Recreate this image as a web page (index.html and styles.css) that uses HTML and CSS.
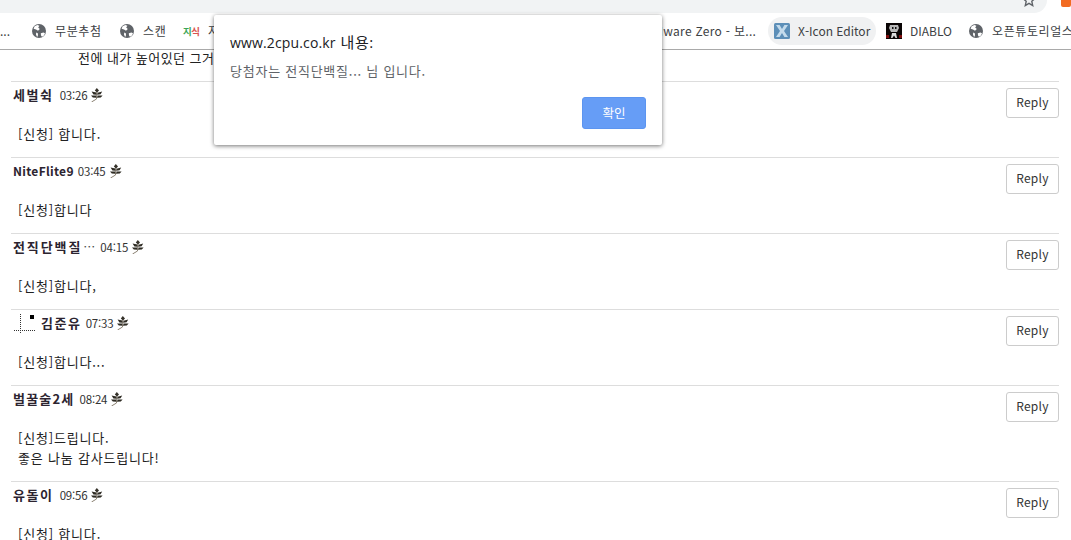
FILE: index.html
```html
<!DOCTYPE html>
<html lang="ko">
<head>
<meta charset="utf-8">
<title>2CPU</title>
<link rel="stylesheet" href="styles.css">
</head>
<body>
<svg class="defs" width="0" height="0" aria-hidden="true">
  <symbol id="globe" viewBox="0 0 14 14">
    <circle cx="7" cy="7" r="7" fill="#5f6368"/>
    <path d="M2.6 2.2 5.4 1 7.4 1.8 6.2 3.6 7.8 5 6 6.8 4 5.4 1.6 4.8zM8.8 9.2l2.6-.8 1.6.8-1 2.2-2 1.4-1-1.4zM4.2 8.4 6 9.6 5.8 12.6 4.8 12.6 4 10.6z" fill="#fff"/>
  </symbol>
  <symbol id="sprig" viewBox="0 0 13 14">
    <path d="M1.5 14 6.5 11 7 3" fill="none" stroke="#8a8172" stroke-width="1"/>
    <path d="M6.8 0 9 2.4 7 4.6 4.8 2.4z" fill="#35322a"/>
    <path d="M1.6 3.4 6.4 4.6 6.6 6.8 3.4 6.4zM12.2 3.6 7.6 4.8 7.2 6.8 10.6 6.2zM1 7.4 6.2 7.4 6.4 9.8 2.8 9.6zM12.6 7.4 7.6 7.6 7 9.8 10.8 9.4z" fill="#2f2c24"/>
  </symbol>
</svg>

<header class="chrome">
  <div class="toolbar">
    <div class="omnibox">
      <svg class="star" viewBox="0 0 14 14"><path d="M7 1.2 8.7 5.1 13 5.5 9.8 8.3 10.7 12.5 7 10.3 3.3 12.5 4.2 8.3 1 5.5 5.3 5.1z" fill="none" stroke="#5f6368" stroke-width="1.4"/></svg>
    </div>
    <div class="extension"></div>
  </div>
  <nav class="bookmarks">
    <span class="mark mark-cut">...</span>
    <span class="mark mark-a ko"><svg class="fav"><use href="#globe"/></svg>무분추첨</span>
    <span class="mark mark-b ko"><svg class="fav"><use href="#globe"/></svg>스캔</span>
    <span class="mark mark-c ko"><span class="jisik"><span class="ji">지</span><span class="sik">식</span></span>저장소</span>
    <span class="mark mark-d">VMware Zero - 보...</span>
    <span class="mark mark-e active">
      <svg class="fav" viewBox="0 0 16 16"><rect width="16" height="16" rx="1.5" fill="#5d8fb8"/><path d="M2 2h3.6L8 6l2.4-4H14l-4 6 4 6h-3.6L8 10l-2.4 4H2l4-6z" fill="#c4dbec"/></svg>X-Icon Editor</span>
    <span class="mark mark-f">
      <svg class="fav" viewBox="0 0 16 16"><rect width="16" height="16" fill="#0a0505"/><path d="M4 2h8l1 3-2 4H5L3 5z" fill="#b9b9b9"/><path d="M6 4h1.5v2H6zM9 4h1.5v2H9z" fill="#111"/><path d="M6 10h4l1 5H9.6L8 12.5 6.4 15H5z" fill="#ddd"/><path d="M0 12h3v3H0zM13 12h3v3h-3z" fill="#7c0d0d"/></svg>DIABLO</span>
    <span class="mark ko"><svg class="fav"><use href="#globe"/></svg>오픈튜토리얼스</span>
  </nav>
</header>

<main class="page">
  <p class="intro">전에 내가 높어있던 그거</p>

  <article class="comment">
    <div class="text">
      <div class="meta"><b class="name">세벌쉭</b><span class="time">03:26</span><svg class="sprig"><use href="#sprig"/></svg></div>
      <p class="body">[신청] 합니다.</p>
    </div>
    <button class="reply">Reply</button>
  </article>

  <article class="comment">
    <div class="text">
      <div class="meta"><b class="name latin">NiteFlite9</b><span class="time">03:45</span><svg class="sprig"><use href="#sprig"/></svg></div>
      <p class="body">[신청]합니다</p>
    </div>
    <button class="reply">Reply</button>
  </article>

  <article class="comment">
    <div class="text">
      <div class="meta"><b class="name long">전직단백질</b><span class="ellipsis">…</span><span class="time">04:15</span><svg class="sprig"><use href="#sprig"/></svg></div>
      <p class="body">[신청]합니다,</p>
    </div>
    <button class="reply">Reply</button>
  </article>

  <article class="comment">
    <div class="text">
      <div class="meta"><svg class="tree" viewBox="0 0 24 20"><path d="M0 16.5H21M6.5 0V20" fill="none" stroke="#333" stroke-width="1" stroke-dasharray="1 1"/><rect x="16" y="1" width="4" height="4" fill="#000"/></svg><b class="name nested">김준유</b><span class="time">07:33</span><svg class="sprig"><use href="#sprig"/></svg></div>
      <p class="body">[신청]합니다...</p>
    </div>
    <button class="reply">Reply</button>
  </article>

  <article class="comment tall">
    <div class="text">
      <div class="meta"><b class="name mixed">벌꿀술2세</b><span class="time">08:24</span><svg class="sprig"><use href="#sprig"/></svg></div>
      <p class="body">[신청]드립니다.<br>좋은 나눔 감사드립니다!</p>
    </div>
    <button class="reply">Reply</button>
  </article>

  <article class="comment">
    <div class="text">
      <div class="meta"><b class="name">유돌이</b><span class="time">09:56</span><svg class="sprig"><use href="#sprig"/></svg></div>
      <p class="body">[신청] 합니다.</p>
    </div>
    <button class="reply">Reply</button>
  </article>
</main>

<div class="dialog" role="alertdialog">
  <h1 class="dialog-title">www.2cpu.co.kr <span class="dialog-ko">내용:</span></h1>
  <p class="dialog-text">당첨자는 전직단백질... 님 입니다.</p>
  <div class="dialog-actions"><button class="ok">확인</button></div>
</div>
</body>
</html>
```
FILE: styles.css
```css
* { box-sizing: border-box; }
html, body { margin: 0; height: 540px; overflow: hidden; }
body {
  background: #fff;
  color: #222;
  font-family: "Noto Sans CJK KR", "Liberation Sans", sans-serif;
  font-size: 12px;
  position: relative;
}
.defs { position: absolute; }

.toolbar { height: 13px; display: flex; }
.omnibox {
  width: 1047px;
  height: 13px;
  background: #f1f3f4;
  border-radius: 0 0 13px 0;
  display: flex;
  justify-content: flex-end;
  overflow: hidden;
}
.star { width: 14px; height: 14px; margin: -7px 11px 0 0; }
.extension {
  width: 10px;
  height: 7px;
  margin-left: 14px;
  background: #f26b21;
  border-radius: 0 0 2px 2px;
}

.bookmarks {
  height: 37px;
  padding-bottom: 1px;
  border-bottom: 1px solid #a9a9a9;
  display: flex;
  align-items: center;
  overflow: hidden;
  white-space: nowrap;
  color: #3c4043;
  font-size: 12px;
}
.mark { display: flex; align-items: center; height: 28px; line-height: 26px; flex: none; border-radius: 14px; }
.ko { letter-spacing: .6px; }
.mark-cut { width: 32px; }
.mark-a { width: 88px; }
.mark-b { width: 63px; }
.mark-c { width: 300px; }
.mark-d { width: 285px; padding-left: 163px; letter-spacing: .3px; }
.mark-e { width: 108px; padding-left: 6px; background: #f0f1f2; }
.mark-f { width: 83px; padding-left: 10px; margin-right: 10px; }
.fav { width: 14px; height: 14px; margin-right: 9px; flex: none; }
.mark-e .fav, .mark-f .fav { width: 16px; height: 16px; margin-right: 8px; }
.jisik { width: 25px; font-size: 9.5px; font-weight: 700; letter-spacing: -.5px; }
.ji { color: #3aa655; }
.sik { color: #d9534f; }

.page { padding: 0 12px 0 11px; }
.intro { margin: -1px 0 0; height: 32px; padding: 0 0 0 67px; line-height: 18px; color: #222; font-size: 13px; letter-spacing: .45px; }

.comment {
  height: 76px;
  border-top: 1px solid #ddd;
  display: flex;
  justify-content: space-between;
  padding-top: 6px;
}
.comment.tall { height: 96px; }
.meta { display: flex; align-items: center; height: 13px; padding-left: 2px; }
.name { font-size: 13px; letter-spacing: 1.6px; color: #2c2430; font-weight: 700; margin-right: 6px; }
.name.long { letter-spacing: 1.9px; margin-right: 1px; }
.name.nested { margin-right: 4px; }
.name.mixed { letter-spacing: 1.2px; margin-right: 5px; }
.name.latin { font-size: 12px; letter-spacing: .3px; margin-right: 4px; }
.ellipsis { margin-right: 5px; color: #444; }
.time { font-size: 11.5px; color: #333; margin-right: 3px; letter-spacing: -.2px; }
.sprig { width: 13px; height: 14px; }
.tree { width: 24px; height: 20px; margin: 2px 3px 0 1px; flex: none; }
.body { margin: 23px 0 0 7px; font-size: 13px; line-height: 20px; color: #222; letter-spacing: .8px; }
.reply {
  width: 53px;
  height: 30px;
  padding: 0 0 4px;
  background: #fff;
  border: 1px solid #ccc;
  border-radius: 3px;
  color: #333;
  font: 12px "Noto Sans CJK KR", "Liberation Sans", sans-serif;
  letter-spacing: .3px;
}

.dialog {
  position: absolute;
  left: 214px;
  top: 15px;
  width: 448px;
  height: 130px;
  background: #fff;
  border-radius: 2px;
  box-shadow: 0 1px 4px rgba(0, 0, 0, .55);
  padding: 16px 16px 16px;
  display: flex;
  flex-direction: column;
}
.dialog-title { margin: 0; font: 400 14px/22px "Open Sans", "Noto Sans CJK KR", sans-serif; letter-spacing: .15px; color: #202124; }
.dialog-ko { font-size: 15px; letter-spacing: .6px; margin-left: 1px; }
.dialog-text { margin: 8px 0 0; font: 400 13px/18px "Noto Sans CJK KR", sans-serif; letter-spacing: .75px; color: #5f6368; }
.dialog-actions { margin-top: auto; display: flex; justify-content: flex-end; }
.ok {
  width: 64px;
  height: 32px;
  padding: 0 0 1px;
  border: 1px solid #5c95f0;
  border-radius: 3px;
  background: #669df6;
  color: #fff;
  font: 12.5px "Noto Sans CJK KR", sans-serif;
}
```
